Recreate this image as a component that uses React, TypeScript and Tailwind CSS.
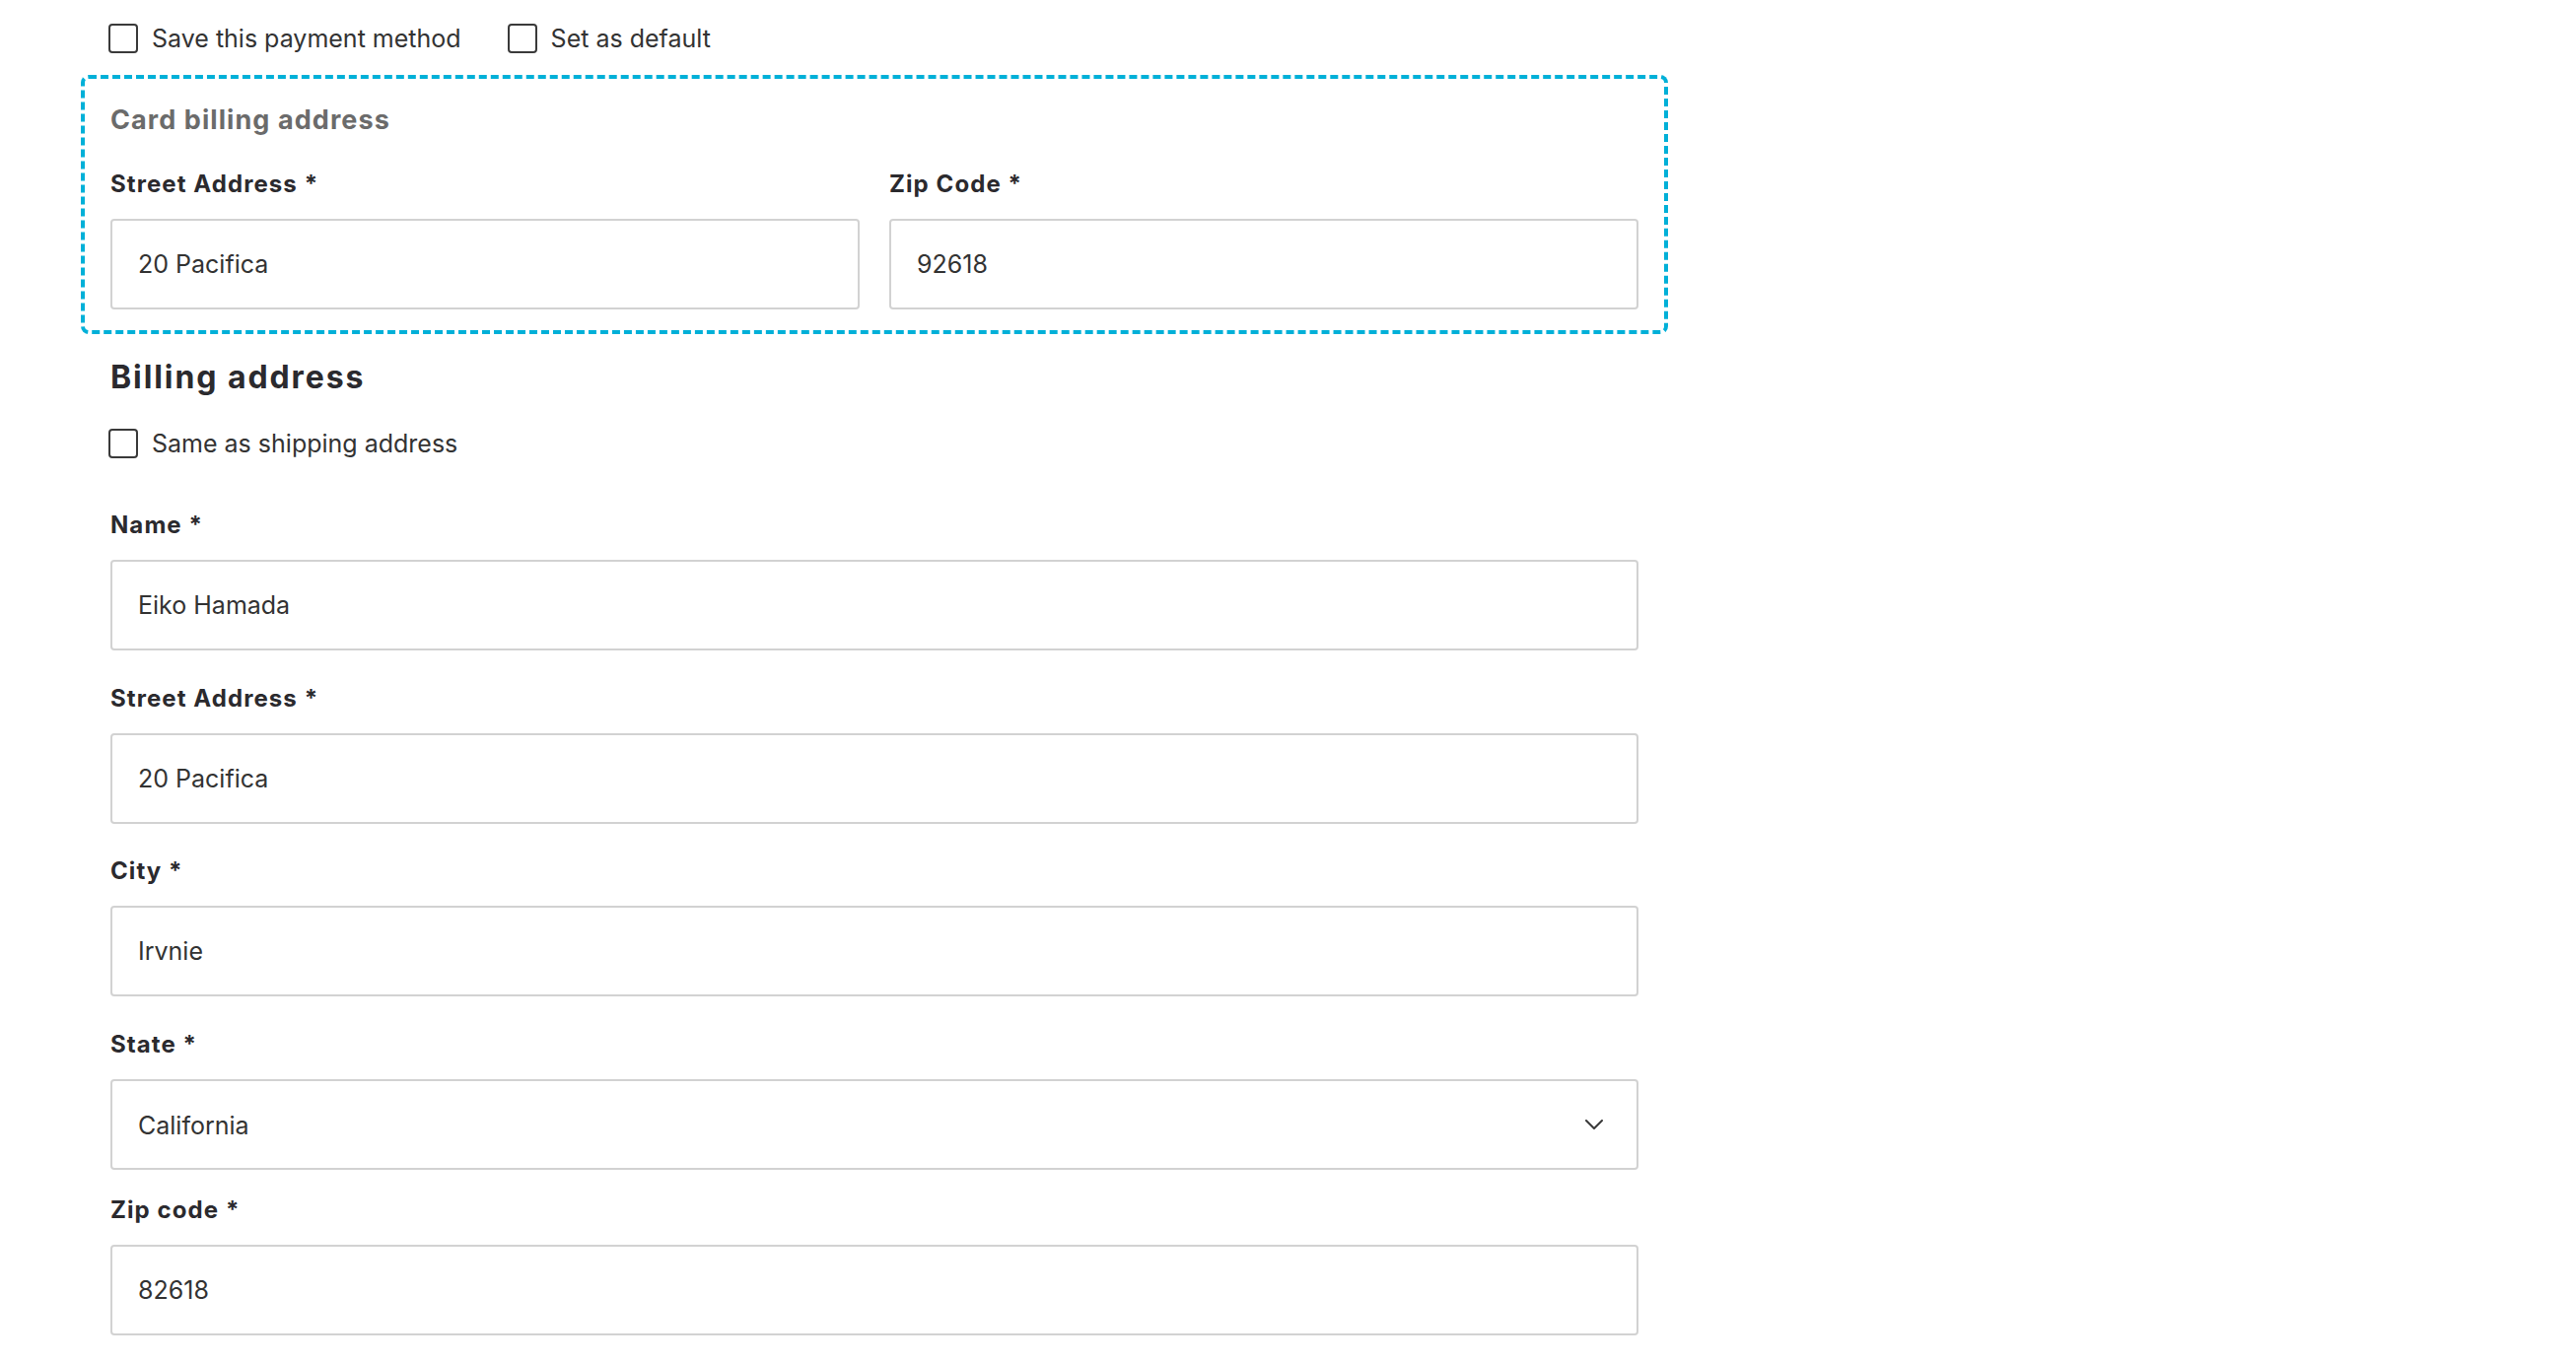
import { useState } from 'react';

const FONT = { fontFamily: 'Inter, "Open Sans", Arial, sans-serif' };

function Check({ label }: { label: string }) {
  const [on, setOn] = useState(false);
  return (
    <label className="flex items-center gap-[14px] cursor-pointer select-none">
      <span
        onClick={() => setOn(!on)}
        className={`w-[30px] h-[30px] shrink-0 rounded-[4px] border-2 border-[#3a3a3a] ${on ? 'bg-[#3a3a3a]' : 'bg-white'}`}
      />
      <span className="text-[25px] leading-[30px] text-[#333]">{label}</span>
    </label>
  );
}

function Label({ children }: { children: string }) {
  return (
    <p className="text-[24px] leading-[30px] font-bold tracking-[0.045em] text-[#2b2a2e] mb-[20px]">{children}</p>
  );
}

function Field({ label, value, className = '' }: { label: string; value: string; className?: string }) {
  return (
    <div className={className}>
      <Label>{label}</Label>
      <input
        readOnly
        defaultValue={value}
        className="w-full h-[92px] rounded-[4px] border-2 border-[#d2d2d2] bg-white px-[26px] text-[25px] text-[#333] outline-none"
        style={FONT}
      />
    </div>
  );
}

export default function App() {
  return (
    <div className="min-h-screen bg-white pl-[82px] pt-[24px]" style={FONT}>
      <div className="w-[1610px]">
        {/* ── Save options ── */}
        <div className="flex items-center gap-[47px] pl-[28px]">
          <Check label="Save this payment method" />
          <Check label="Set as default" />
        </div>

        {/* ── Card billing address ── */}
        <div className="mt-[22px] rounded-[8px] border-4 border-dashed border-[#00b0d8] px-[26px] pt-[26px] pb-[21px]">
          <h3 className="text-[27px] leading-[32px] font-bold tracking-[0.04em] text-[#6b6b6b]">Card billing address</h3>
          <div className="mt-[34px] grid grid-cols-2 gap-[30px]">
            <Field label="Street Address *" value="20 Pacifica" />
            <Field label="Zip Code *" value="92618" />
          </div>
        </div>

        {/* ── Billing address ── */}
        <div className="px-[30px]">
          <h2 className="mt-[26px] text-[32px] leading-[36px] font-bold tracking-[0.06em] text-[#2b2a2e]">Billing address</h2>
          <div className="mt-[34px] -ml-[2px]">
            <Check label="Same as shipping address" />
          </div>

          <Field className="mt-[53px]" label="Name *" value="Eiko Hamada" />
          <Field className="mt-[34px]" label="Street Address *" value="20 Pacifica" />
          <Field className="mt-[33px]" label="City *" value="Irvnie" />

          <div className="mt-[34px]">
            <Label>State *</Label>
            <div className="flex h-[92px] items-center justify-between rounded-[4px] border-2 border-[#d2d2d2] bg-white pl-[26px] pr-[34px]">
              <span className="text-[25px] text-[#333] pt-[4px]">California</span>
              <svg width="18" height="10" viewBox="0 0 18 10" fill="none">
                <polyline points="1,1 9,9 17,1" stroke="#3a3a3a" strokeWidth="2" strokeLinecap="round" strokeLinejoin="round" />
              </svg>
            </div>
          </div>

          <Field className="mt-[26px]" label="Zip code *" value="82618" />
        </div>
      </div>
    </div>
  );
}
